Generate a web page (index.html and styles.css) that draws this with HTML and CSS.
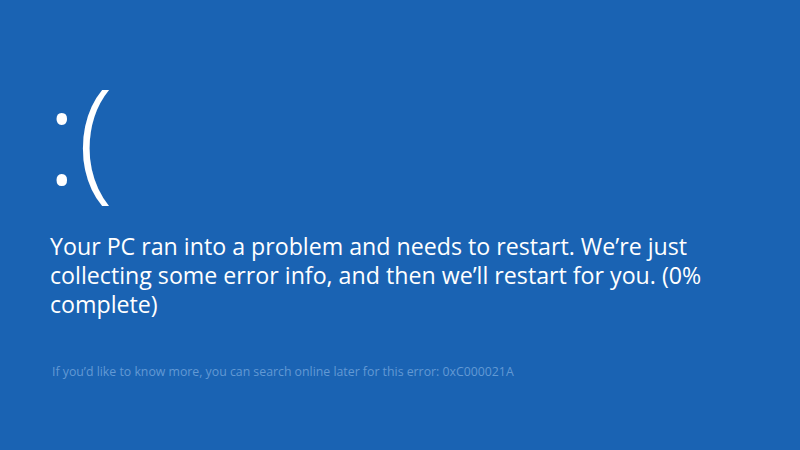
FILE: index.html
```html
<!DOCTYPE html>
<html>
<head>
<meta charset="utf-8">
<link rel="stylesheet" href="styles.css">
</head>
<body>
<main class="screen">
  <div class="face">:(</div>
  <p class="message">Your PC ran into a problem and needs to restart. We’re just collecting some error info, and then we’ll restart for you. (0% complete)</p>
  <p class="info">If you’d like to know more, you can search online later for this error: 0xC000021A</p>
</main>
</body>
</html>
```
FILE: styles.css
```css
html, body {
  margin: 0;
  padding: 0;
  width: 800px;
  height: 450px;
  overflow: hidden;
  background: #1a63b3;
}
.screen {
  display: flex;
  flex-direction: column;
  padding: 68px 0 0 46px;
  font-family: "Open Sans", "Noto Sans", sans-serif;
  color: #ffffff;
}
.face {
  font-size: 132px;
  font-weight: 300;
  line-height: 1;
  height: 150px;
}
.message {
  margin: 14px 0 0 4px;
  width: 700px;
  font-size: 23.2px;
  line-height: 29px;
}
.info {
  margin: 44px 0 0 6px;
  font-size: 12.3px;
  color: #6299d4;
}
```
